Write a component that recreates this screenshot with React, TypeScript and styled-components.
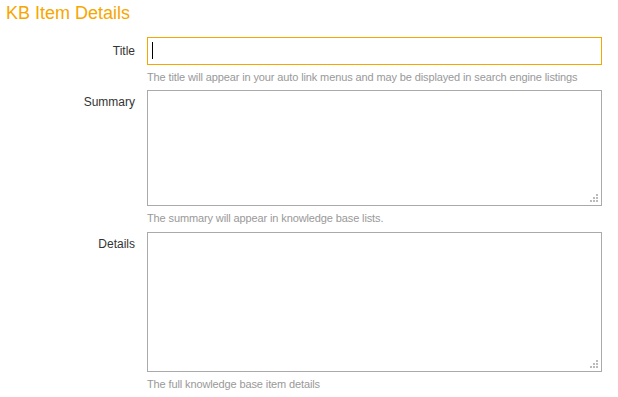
import React from 'react';
import styled, { createGlobalStyle } from 'styled-components';

const Global = createGlobalStyle`
	body {
		margin: 0;
		background: #fff;
		font-family: "Liberation Sans", Arial, sans-serif;
	}
`;

const Page = styled.div`
	padding: 0 16px 0 6px;
	width: 618px;
	box-sizing: border-box;
`;

const Heading = styled.h1`
	margin: 0;
	padding-top: 2px;
	height: 35px;
	font-size: 18px;
	font-weight: normal;
	color: #f7a600;
	line-height: 22px;
`;

const Form = styled.div`
	display: grid;
	grid-template-columns: 129px 455px;
	column-gap: 12px;
`;

const Label = styled.label<{ $top: number }>`
	text-align: right;
	font-size: 12px;
	color: #333;
	padding-top: ${({ $top }) => $top}px;
`;

const Field = styled.div`
	display: flex;
	flex-direction: column;
`;

const Box = styled.div`
	position: relative;
`;

const TextInput = styled.input`
	display: block;
	width: 100%;
	height: 28px;
	box-sizing: border-box;
	border: 1px solid #f7a600;
	outline: none;
	padding: 0 5px;
	font: inherit;
	font-size: 12px;
`;

const TextArea = styled.textarea<{ $h: number }>`
	display: block;
	width: 100%;
	height: ${({ $h }) => $h}px;
	box-sizing: border-box;
	border: 1px solid #aaa;
	outline: none;
	resize: none;
	padding: 4px;
	font: inherit;
	font-size: 12px;
`;

const Caret = styled.span`
	position: absolute;
	left: 5px;
	top: 5px;
	width: 1px;
	height: 17px;
	background: #000;
`;

const Grip = styled.svg`
	position: absolute;
	right: 4px;
	bottom: 4px;
`;

const Hint = styled.div<{ $h: number }>`
	height: ${({ $h }) => $h}px;
	padding-top: 6px;
	box-sizing: border-box;
	font-size: 11px;
	letter-spacing: -0.12px;
	color: #999;
	line-height: 13px;
`;

const ResizeGrip = () => (
	<Grip width="8" height="8" viewBox="0 0 8 8">
		<rect x="6" y="0" width="2" height="2" fill="#bbb" />
		<rect x="3" y="3" width="2" height="2" fill="#bbb" />
		<rect x="6" y="3" width="2" height="2" fill="#bbb" />
		<rect x="0" y="6" width="2" height="2" fill="#bbb" />
		<rect x="3" y="6" width="2" height="2" fill="#bbb" />
		<rect x="6" y="6" width="2" height="2" fill="#bbb" />
	</Grip>
);

export default function App() {
	return (
		<Page>
			<Global />
			<Heading>KB Item Details</Heading>
			<Form>
				<Label $top={7}>Title</Label>
				<Field>
					<Box>
						<TextInput type="text" />
						<Caret />
					</Box>
					<Hint $h={25}>The title will appear in your auto link menus and may be displayed in search engine listings</Hint>
				</Field>

				<Label $top={5}>Summary</Label>
				<Field>
					<Box>
						<TextArea $h={116} />
						<ResizeGrip />
					</Box>
					<Hint $h={26}>The summary will appear in knowledge base lists.</Hint>
				</Field>

				<Label $top={5}>Details</Label>
				<Field>
					<Box>
						<TextArea $h={140} />
						<ResizeGrip />
					</Box>
					<Hint $h={26}>The full knowledge base item details</Hint>
				</Field>
			</Form>
		</Page>
	);
}
